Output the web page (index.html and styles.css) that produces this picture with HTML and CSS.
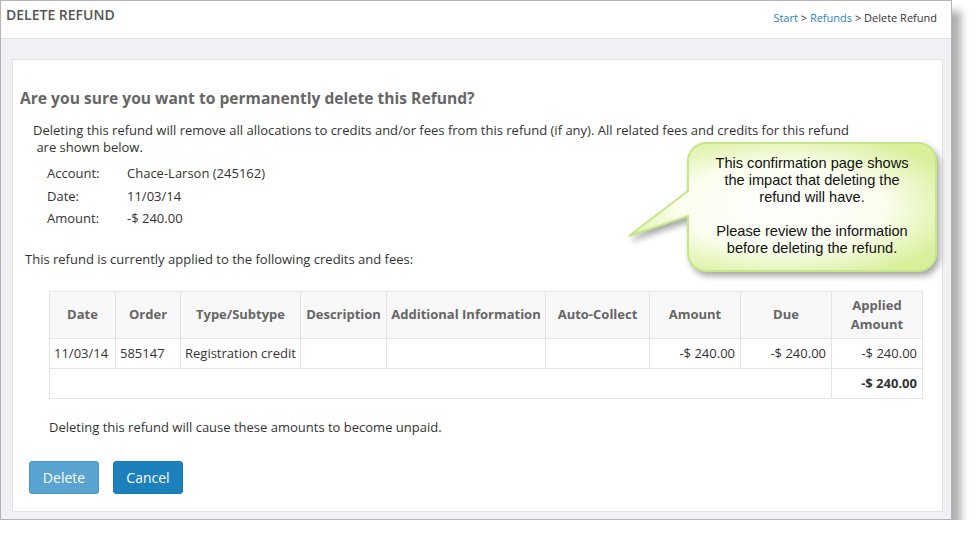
FILE: index.html
```html
<!DOCTYPE html>
<html lang="en">
<head>
  <meta charset="UTF-8">
  <meta name="viewport" content="width=device-width, initial-scale=1.0">
  <title>Delete Refund</title>
  <link rel="stylesheet" href="styles.css">
</head>
<body>
  <div class="window">
    <!-- Top Bar -->
    <div class="topbar">
      <h1 class="page-title">DELETE REFUND</h1>
      <div class="crumbs">
        <a href="#">Start</a> &gt; <a href="#">Refunds</a> &gt; Delete Refund
      </div>
    </div>

    <!-- Content -->
    <div class="content">
      <div class="panel">
        <h2 class="confirm-title">Are you sure you want to permanently delete this Refund?</h2>
        <p class="intro">Deleting this refund will remove all allocations to credits and/or fees from this refund (if any). All related fees and credits for this refund<br>&nbsp;are shown below.</p>

        <div class="details">
          <span class="details-label">Account:</span><span>Chace-Larson (245162)</span>
          <span class="details-label">Date:</span><span>11/03/14</span>
          <span class="details-label">Amount:</span><span>-$ 240.00</span>
        </div>

        <p class="applied-note">This refund is currently applied to the following credits and fees:</p>

        <table class="fees">
          <colgroup>
            <col class="col-date">
            <col class="col-order">
            <col class="col-type">
            <col class="col-desc">
            <col class="col-info">
            <col class="col-auto">
            <col class="col-money">
            <col class="col-money">
            <col class="col-money">
          </colgroup>
          <thead>
            <tr>
              <th>Date</th>
              <th>Order</th>
              <th>Type/Subtype</th>
              <th>Description</th>
              <th>Additional Information</th>
              <th>Auto-Collect</th>
              <th>Amount</th>
              <th>Due</th>
              <th>Applied Amount</th>
            </tr>
          </thead>
          <tbody>
            <tr>
              <td>11/03/14</td>
              <td>585147</td>
              <td>Registration credit</td>
              <td></td>
              <td></td>
              <td></td>
              <td class="money">-$ 240.00</td>
              <td class="money">-$ 240.00</td>
              <td class="money">-$ 240.00</td>
            </tr>
            <tr class="total-row">
              <td colspan="8"></td>
              <td class="money">-$ 240.00</td>
            </tr>
          </tbody>
        </table>

        <p class="unpaid-note">Deleting this refund will cause these amounts to become unpaid.</p>

        <div class="actions">
          <button class="btn btn-delete">Delete</button>
          <button class="btn btn-cancel">Cancel</button>
        </div>
      </div>
    </div>

    <!-- Help Callout -->
    <div class="callout">
      <svg class="callout-shape" width="330" height="145" viewBox="0 0 330 145">
        <defs>
          <radialGradient id="calloutFill" cx="50%" cy="50%" r="60%">
            <stop offset="0%" stop-color="#ffffff"/>
            <stop offset="55%" stop-color="#fbfeef"/>
            <stop offset="100%" stop-color="#d8f09a"/>
          </radialGradient>
        </defs>
        <path d="M85 7 H297 A18 18 0 0 1 315 25 V117 A18 18 0 0 1 297 135 H85 A18 18 0 0 1 67 117 V80 L8 100 L67 55 V25 A18 18 0 0 1 85 7 Z"
              fill="url(#calloutFill)" stroke="#c6e68c" stroke-width="2"/>
      </svg>
      <div class="callout-text">
        This confirmation page shows<br>
        the impact that deleting the<br>
        refund will have.<br>
        <br>
        Please review the information<br>
        before deleting the refund.
      </div>
    </div>
  </div>
</body>
</html>
```

FILE: styles.css
```css
/* General Styles */
body {
  font-family: "Open Sans", Arial, sans-serif;
  margin: 0;
  padding: 0;
  background-color: #ffffff;
  color: #333;
}

/* Window Frame */
.window {
  position: relative;
  width: 950px;
  border: 1px solid #b3b3b3;
  box-shadow: 9px 11px 8px rgba(0, 0, 0, 0.32);
}

/* Top Bar */
.topbar {
  height: 37px;
  display: flex;
  justify-content: space-between;
  align-items: flex-start;
  background-color: #ffffff;
  border-bottom: 1px solid #e3e4e7;
}

.page-title {
  margin: 0;
  padding: 4px 0 0 5px;
  font-size: 14px;
  font-weight: 600;
  line-height: 20px;
  color: #555;
}

.crumbs {
  padding: 9px 14px 0 0;
  font-size: 11px;
  line-height: 16px;
  color: #333;
}

.crumbs a {
  color: #2b84c3;
  text-decoration: none;
}

/* Content */
.content {
  background-color: #f0f1f4;
  padding: 20px 8px 7px 11px;
}

.panel {
  background-color: #ffffff;
  border: 1px solid #e1e2e5;
  padding: 27px 0 17px 7px;
}

.confirm-title {
  margin: 0;
  font-size: 15.6px;
  font-weight: 700;
  line-height: 22px;
  color: #666;
}

.intro {
  margin: 13px 0 0 13px;
  font-size: 13px;
  line-height: 17px;
}

.details {
  display: grid;
  grid-template-columns: 80px auto;
  grid-auto-rows: 22.5px;
  align-items: center;
  margin: 6px 0 0 27px;
  font-size: 13px;
}

.applied-note {
  margin: 20px 0 0 5px;
  font-size: 13px;
  line-height: 18px;
}

/* Fees Table */
.fees {
  margin: 23px 0 0 29px;
  width: 873px;
  border-collapse: collapse;
  table-layout: fixed;
  font-size: 13px;
}

.col-date { width: 66px; }
.col-order { width: 65px; }
.col-type { width: 120px; }
.col-desc { width: 86px; }
.col-info { width: 159px; }
.col-auto { width: 104px; }
.col-money { width: 91px; }

.fees th,
.fees td {
  border: 1px solid #e4e4e4;
  line-height: 19px;
}

.fees th {
  background-color: #f8f8f8;
  color: #666;
  font-weight: 700;
  padding: 4px 2px;
  height: 37px;
  text-align: center;
}

.fees td {
  padding: 5px 5px 5px 4px;
  text-align: left;
  white-space: nowrap;
}

.fees td.money {
  text-align: right;
}

.total-row td.money {
  font-weight: 700;
}

.unpaid-note {
  margin: 19px 0 0 29px;
  font-size: 13px;
  line-height: 18px;
}

/* Buttons */
.actions {
  display: flex;
  gap: 14px;
  margin: 25px 0 0 9px;
}

.btn {
  width: 70px;
  height: 33px;
  border-radius: 3px;
  font-family: "Open Sans", Arial, sans-serif;
  font-size: 14px;
  color: #ffffff;
  cursor: pointer;
}

.btn-delete {
  background-color: #58a3cf;
  border: 1px solid #4a95c4;
}

.btn-cancel {
  background-color: #1b80bc;
  border: 1px solid #1a7ab4;
}

/* Help Callout */
.callout {
  position: absolute;
  left: 620px;
  top: 135px;
  width: 330px;
  height: 145px;
}

.callout-shape {
  display: block;
  filter: drop-shadow(3px 4px 3px rgba(0, 0, 0, 0.35));
}

.callout-text {
  position: absolute;
  left: 67px;
  top: 19px;
  width: 248px;
  text-align: center;
  font-family: "Liberation Sans", Arial, sans-serif;
  font-size: 14.6px;
  line-height: 17px;
  color: #111;
}
```
